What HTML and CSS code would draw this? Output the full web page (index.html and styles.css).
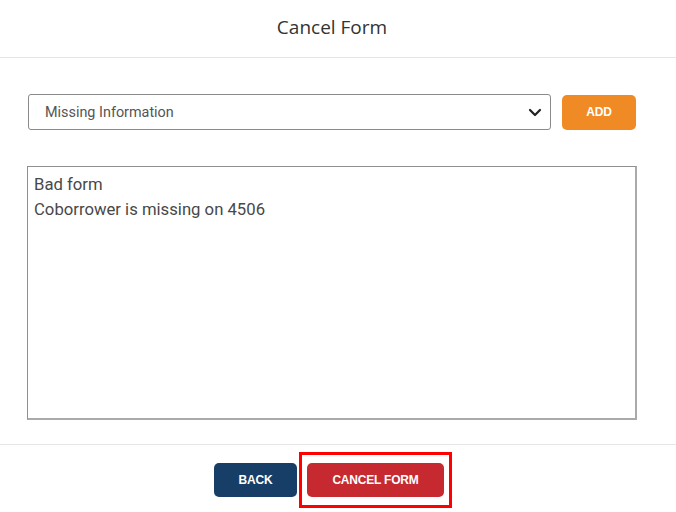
FILE: index.html
```html
<!DOCTYPE html>
<html>
<head>
<meta charset="utf-8">
<link rel="stylesheet" href="styles.css">
</head>
<body>
<div class="modal">
  <div class="header"><h1 class="title">Cancel Form</h1></div>
  <div class="content">
    <div class="row">
      <div class="select">
        <span class="select-text">Missing Information</span>
        <svg class="chev" width="14" height="9" viewBox="0 0 14 9"><path d="M2 2 L7 7 L12 2" fill="none" stroke="#222" stroke-width="2.2" stroke-linecap="round" stroke-linejoin="round"/></svg>
      </div>
      <button class="btn btn-add">ADD</button>
    </div>
    <div class="textarea">Bad form<br>Coborrower is missing on 4506</div>
  </div>
  <div class="footer">
    <button class="btn btn-back">BACK</button>
    <div class="highlight"><button class="btn btn-cancel">CANCEL FORM</button></div>
  </div>
</div>
</body>
</html>
```
FILE: styles.css
```css
* { box-sizing: border-box; }
html, body { margin: 0; padding: 0; background: #fff; }
body { font-family: Roboto, "Liberation Sans", sans-serif; width: 676px; height: 512px; overflow: hidden; }
.modal { display: flex; flex-direction: column; height: 512px; }
.header { height: 58px; border-bottom: 1px solid #e6e6e6; display: flex; align-items: center; justify-content: center; padding-right: 12px; }
.title { margin: 0 0 4px 0; font-family: "Open Sans", "Noto Sans", sans-serif; font-weight: 400; font-size: 19px; color: #333; }
.content { padding: 36px 39px 24px 27px; flex: 1; display: flex; flex-direction: column; }
.row { display: flex; align-items: center; gap: 11px; margin-left: 1px; margin-right: 1px; }
.select { flex: 1; height: 36px; border: 1px solid #8a8a8a; border-radius: 3px; display: flex; align-items: center; justify-content: space-between; padding: 0 8px 0 16px; }
.select-text { font-size: 14.4px; color: #555; }
.chev { display: block; }
.btn { border: none; border-radius: 5px; color: #fff; font-family: Arial, "Liberation Sans", sans-serif; font-weight: bold; font-size: 12px; letter-spacing: -0.2px; cursor: pointer; }
.btn-add { width: 74px; height: 35px; background: #f08a24; }
.textarea { margin-top: 36px; height: 254px; border: 1px solid #8f8f8f; border-right-width: 2px; border-bottom-width: 2px; border-right-color: #aaa; border-bottom-color: #aaa; padding: 5px 6px; font-size: 16.7px; line-height: 25px; color: #484848; }
.footer { height: 68px; border-top: 1px solid #e6e6e6; display: flex; justify-content: center; gap: 10px; padding-top: 18px; padding-right: 18px; }
.btn-back { width: 83px; height: 34px; background: #173e66; }
.highlight { position: relative; height: 34px; }
.highlight::after { content: ""; position: absolute; top: -11px; bottom: -11px; left: -8px; right: -8px; border: 3px solid #f00; pointer-events: none; }
.btn-cancel { width: 137px; height: 34px; background: #c6292f; }
```
